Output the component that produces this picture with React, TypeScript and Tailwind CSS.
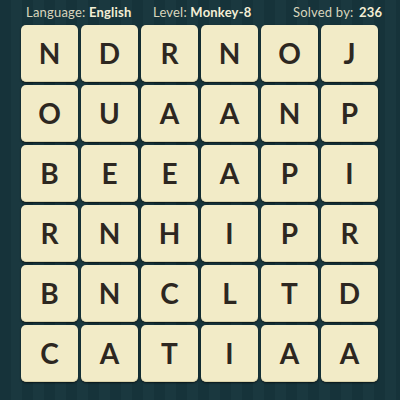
import React from 'react';

const rows = ['NDRNOJ', 'OUAANP', 'BEEAPI', 'RNHIPR', 'BNCLTD', 'CATIAA'];

const App: React.FC = () => {
  return (
    <div
      className="w-[400px] h-[400px] overflow-hidden bg-[repeating-linear-gradient(90deg,#16333a_0px,#16333a_11px,#1a383f_11px,#1a383f_22px)]"
      style={{ fontFamily: 'Lato, "Noto Sans", sans-serif' }}
    >
      <div className="flex items-center h-[25px] pl-[26px] text-[13px] text-[#d8d5bd] tracking-[0.2px]">
        <span className="w-[127px]">
          Language: <span className="font-bold text-[#f3eed5]">English</span>
        </span>
        <span className="w-[140px]">
          Level: <span className="font-bold text-[#f3eed5]">Monkey-8</span>
        </span>
        <span>
          Solved by: <span className="font-bold text-[#f3eed5] ml-0.5">236</span>
        </span>
      </div>
      <div className="grid grid-cols-[repeat(6,57px)] auto-rows-[57px] gap-[3px] pl-[21px]">
        {rows.map((row, r) =>
          row.split('').map((ch, c) => (
            <div
              key={`${r}-${c}`}
              className="rounded-[5px] bg-[#f2ebc7] flex items-center justify-center text-[28px] font-bold text-[#2d2721] shadow-[0_1px_2px_rgba(0,0,0,0.6)] border-b border-[#d9d1a8]"
            >
              {ch}
            </div>
          ))
        )}
      </div>
    </div>
  );
};

export default App;
